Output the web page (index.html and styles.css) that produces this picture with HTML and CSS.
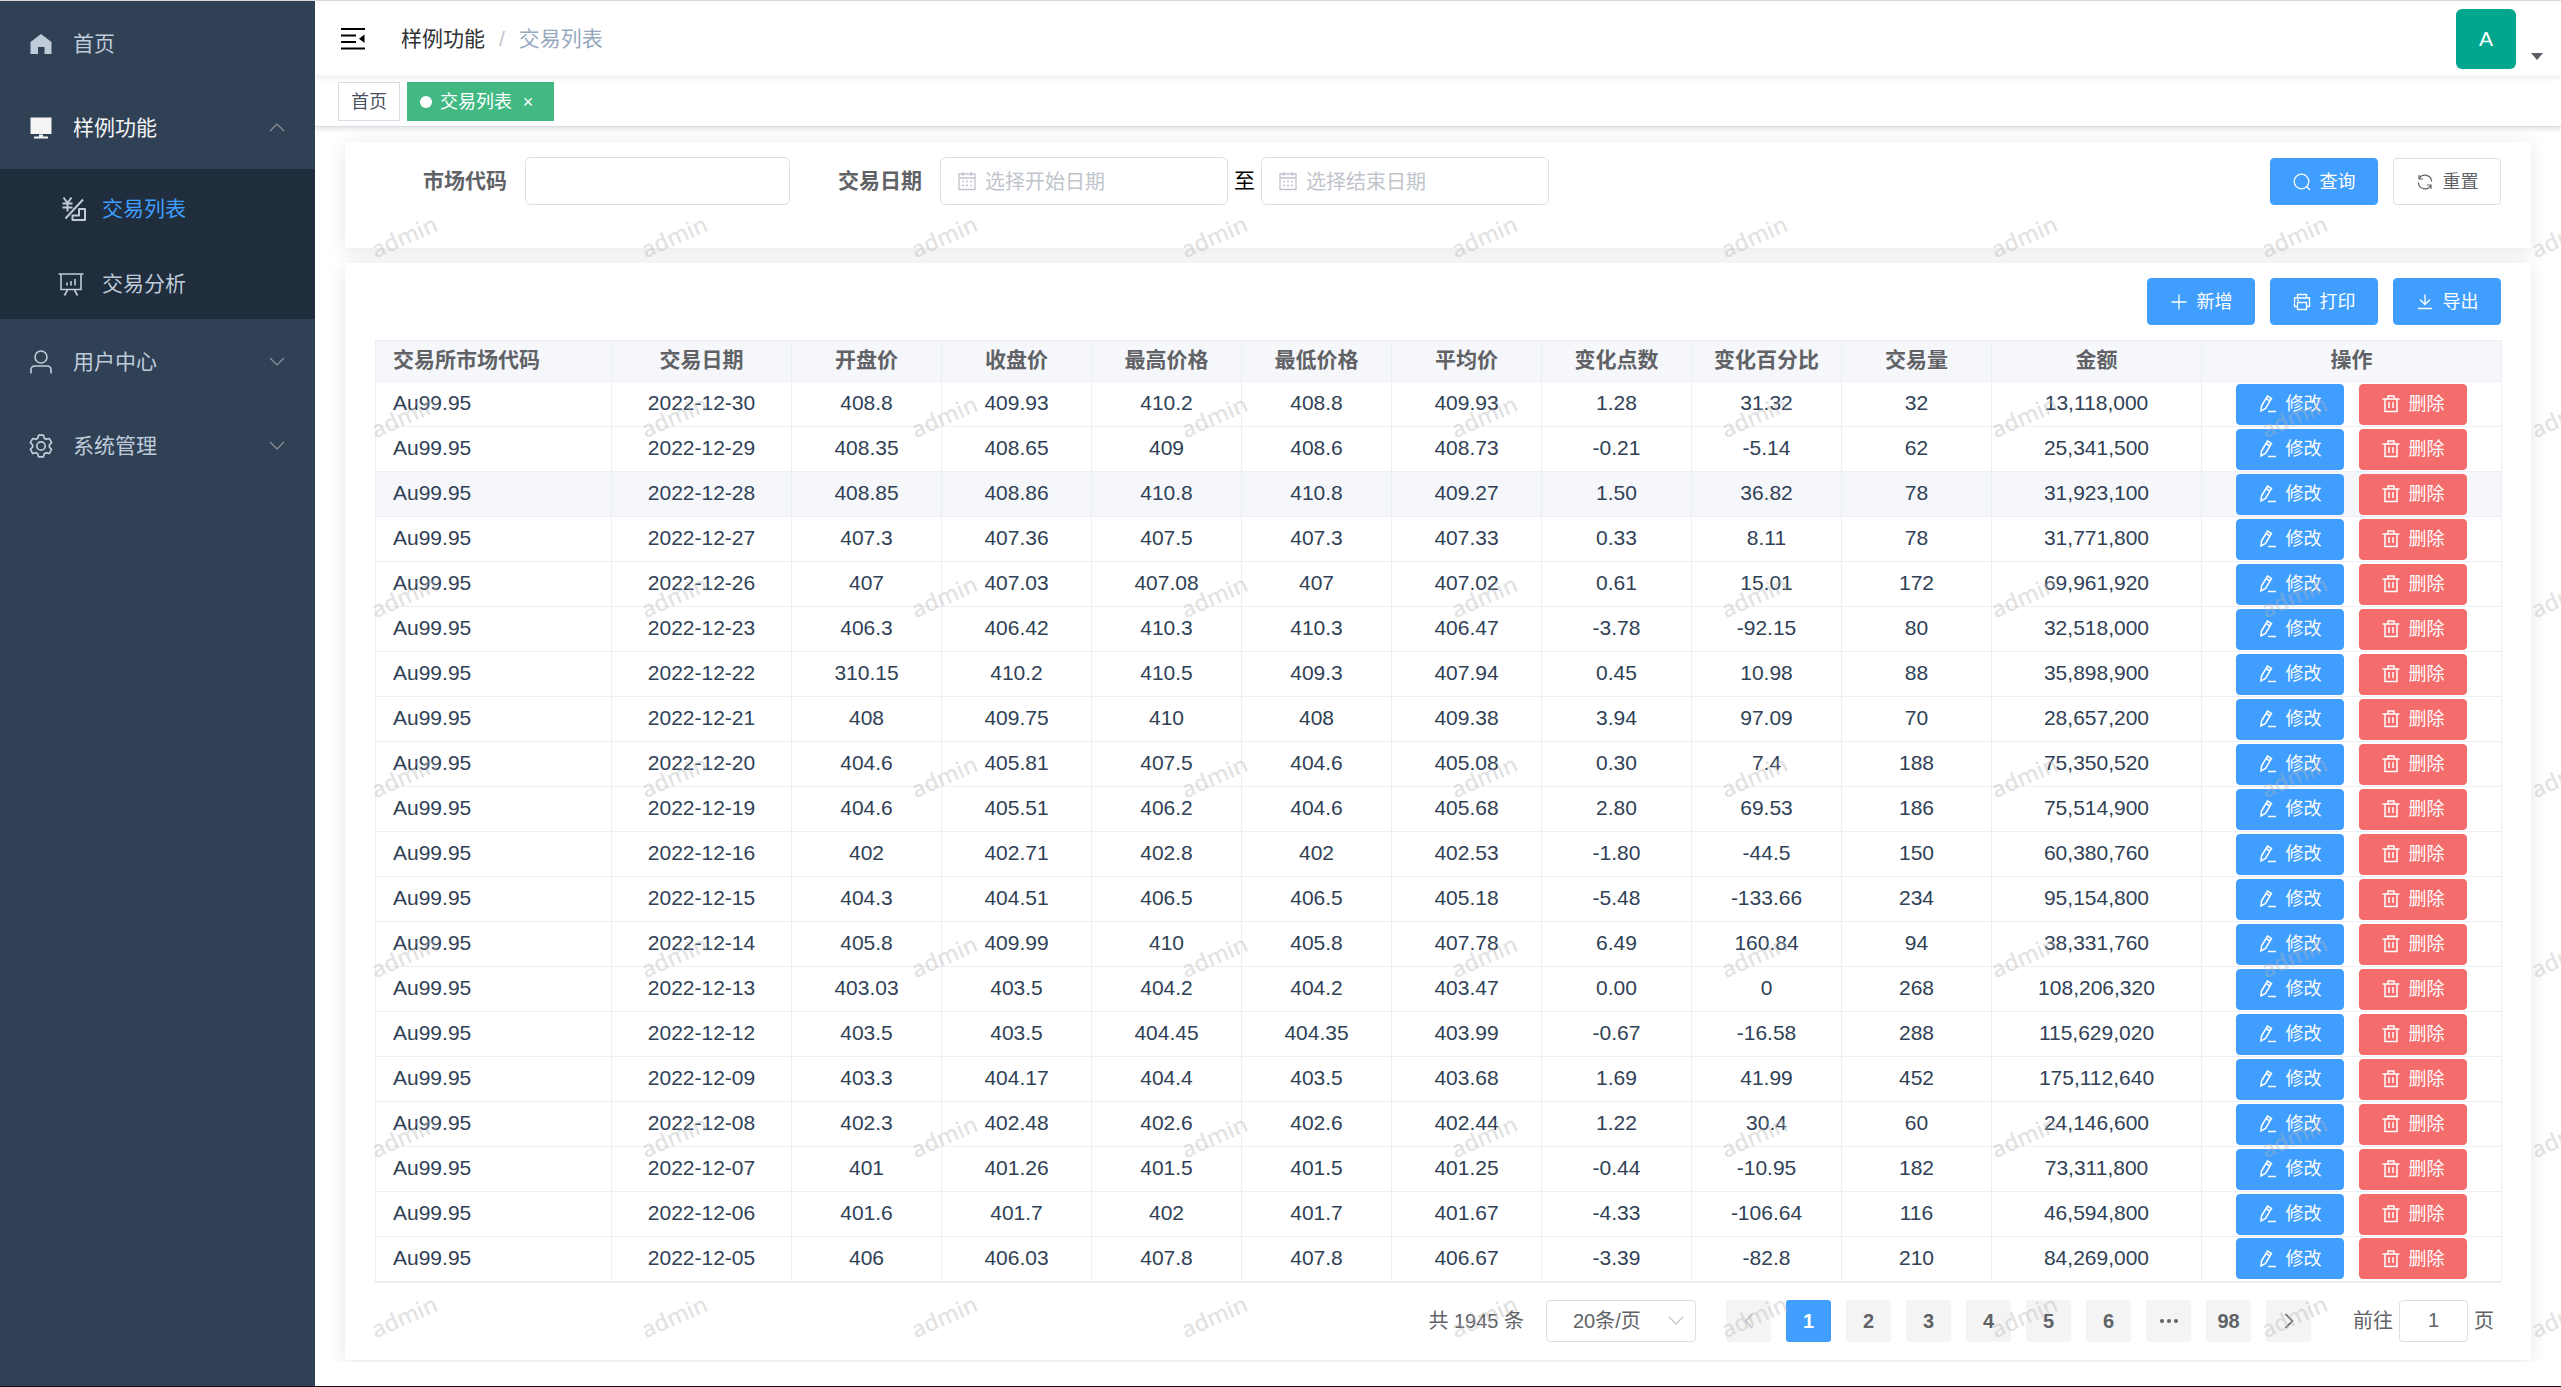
FILE: index.html
```html
<!DOCTYPE html>
<html lang="zh-CN">
<head>
<meta charset="utf-8">
<meta name="viewport" content="width=device-width, initial-scale=1">
<title>交易列表</title>
<link rel="stylesheet" href="styles.css">
</head>
<body>
<svg class="sprite" aria-hidden="true">
  <symbol id="i-home" viewBox="0 0 24 24"><path fill="currentColor" d="M12 2 22.500 10V22H15.500V15H9V22H1.500V10Z"/></symbol>
  <symbol id="i-monitor" viewBox="0 0 24 24"><path fill="currentColor" d="M1.500 1.500H22.500V18H1.500ZM10 18.500H14V20.500H19V22.500H5V20.500H10Z"/></symbol>
  <symbol id="i-list" viewBox="-2 0 24 24" overflow="visible"><g fill="none" stroke="currentColor" stroke-width="2"><path d="M1.500 0.500 5.500 6 9.500 0.500M0.500 6.500H10.500M0.500 10.500H10.500M5.500 6V14.500M21 2.500 3.500 21.500M17 12H23V23H10.500V18.500H17Z" stroke-linejoin="round"/></g></symbol>
  <symbol id="i-board" viewBox="1 0 24 24" overflow="visible"><g fill="none" stroke="currentColor" stroke-width="1.600"><path d="M-0.500 2H24.500M2 2V17.500H22V2M8.500 18 5.500 23.500M15.500 18 18.500 23.500M8 10.500V13.500M12 9V13.500M16 7V13.500"/></g></symbol>
  <symbol id="i-user" viewBox="0 0 24 24"><g fill="none" stroke="currentColor" stroke-width="1.600"><circle cx="12" cy="7" r="6"/><path d="M2 23.500V20Q2 16 6 16H18Q22 16 22 20V23.500"/></g></symbol>
  <symbol id="i-gear" viewBox="54 54 916 916"><path fill="currentColor" d="M600.704 64a32 32 0 0 1 30.464 22.208l35.200 109.376c14.784 7.232 28.928 15.360 42.432 24.512l112.384-24.192a32 32 0 0 1 34.432 15.360L944.320 364.800a32 32 0 0 1-4.032 37.504l-77.120 85.120a357.120 357.120 0 0 1 0 49.024l77.120 85.248a32 32 0 0 1 4.032 37.504l-88.704 153.600a32 32 0 0 1-34.432 15.296L708.800 803.904c-13.440 9.088-27.648 17.280-42.368 24.512l-35.264 109.376A32 32 0 0 1 600.704 960H423.296a32 32 0 0 1-30.464-22.208L357.696 828.480a351.616 351.616 0 0 1-42.560-24.640l-112.320 24.256a32 32 0 0 1-34.432-15.360L79.680 659.200a32 32 0 0 1 4.032-37.504l77.120-85.248a357.120 357.120 0 0 1 0-48.896l-77.120-85.248A32 32 0 0 1 79.680 364.800l88.704-153.600a32 32 0 0 1 34.432-15.296l112.320 24.256c13.568-9.152 27.776-17.408 42.560-24.640l35.200-109.312A32 32 0 0 1 423.232 64H600.640zm-23.424 64H446.720l-36.352 113.088-24.512 11.968a294.113 294.113 0 0 0-34.816 20.096l-22.656 15.360-116.224-25.088-65.280 113.152 79.680 88.192-1.920 27.136a293.120 293.120 0 0 0 0 40.192l1.920 27.136-79.808 88.192 65.344 113.152 116.224-25.024 22.656 15.296a294.113 294.113 0 0 0 34.816 20.096l24.512 11.968L446.720 896h130.688l36.480-113.152 24.448-11.904a288.282 288.282 0 0 0 34.752-20.096l22.592-15.296 116.288 25.024 65.280-113.152-79.744-88.192 1.920-27.136a293.120 293.120 0 0 0 0-40.256l-1.920-27.136 79.808-88.128-65.344-113.152-116.288 24.960-22.592-15.232a287.616 287.616 0 0 0-34.752-20.096l-24.448-11.904L577.344 128zM512 320a192 192 0 1 1 0 384 192 192 0 0 1 0-384m0 64a128 128 0 1 0 0 256 128 128 0 0 0 0-256"/></symbol>
  <symbol id="i-down" viewBox="0 0 18 18"><path fill="none" stroke="currentColor" stroke-width="1.200" d="M2 5 9 12 16 5"/></symbol>
  <symbol id="i-up" viewBox="0 0 18 18"><path fill="none" stroke="currentColor" stroke-width="1.200" d="M2 12 9 5 16 12"/></symbol>
  <symbol id="i-left" viewBox="0 0 18 18"><path fill="none" stroke="currentColor" stroke-width="1.600" d="M12.500 2 5.500 9 12.500 16"/></symbol>
  <symbol id="i-right" viewBox="0 0 18 18"><path fill="none" stroke="currentColor" stroke-width="1.600" d="M5.500 2 12.500 9 5.500 16"/></symbol>
  <symbol id="i-fold" viewBox="0 0 24 24"><path fill="currentColor" d="M0 1H24V3H0ZM0 7.500H15V9.500H0ZM0 14H15V16H0ZM0 20.500H24V22.500H0ZM23.500 7.500V16L18 11.800Z"/></symbol>
  <symbol id="i-calendar" viewBox="0 0 20 20"><path fill="none" stroke="currentColor" stroke-width="1.300" d="M2 3H18V18.500H2ZM2 7H18M6 1V5M14 1V5M5 10.500H7M9 10.500H11M13 10.500H15M5 14.500H7M9 14.500H11M13 14.500H15"/></symbol>
  <symbol id="i-search" viewBox="0 0 18 18"><g fill="none" stroke="currentColor" stroke-width="1.300"><circle cx="8.500" cy="8.500" r="7.300"/><path d="M13.500 13.500 17 17"/></g></symbol>
  <symbol id="i-refresh" viewBox="0 0 18 18"><path fill="none" stroke="currentColor" stroke-width="1.200" d="M3 2V6H7M3 6A6.700 6.700 0 0 1 15.700 8.500M15 16V12H11M15 12A6.700 6.700 0 0 1 2.300 9.500"/></symbol>
  <symbol id="i-plus" viewBox="0 0 18 18"><path fill="none" stroke="currentColor" stroke-width="1.300" d="M9 1.500V16.500M1.500 9H16.500"/></symbol>
  <symbol id="i-print" viewBox="0 0 18 18"><path fill="none" stroke="currentColor" stroke-width="1.300" d="M4.500 5V1.500H13.500V5M4.500 13.500H1.500V5H16.500V13.500H13.500M4.500 9.500H13.500V16.500H4.500ZM4 7.300H6"/></symbol>
  <symbol id="i-download" viewBox="0 0 18 18"><path fill="none" stroke="currentColor" stroke-width="1.300" d="M9 1.500V11.500M4 6.500 9 11.500 14 6.500M2 15.500H16"/></symbol>
  <symbol id="i-edit" viewBox="0 0 18 18"><path fill="none" stroke="currentColor" stroke-width="1.500" d="M2.500 11 8.500 1 12.500 3.500 6.500 13.500 2 16ZM7 3.500 11 6M9 16.500H17"/></symbol>
  <symbol id="i-trash" viewBox="0 0 18 18"><path fill="none" stroke="currentColor" stroke-width="1.500" d="M0.500 4H17.500M6 4V1H12V4M3 4V16.500H15V4M7 7V13M11 7V13"/></symbol>
</svg>

<div class="app">
  <nav class="sidebar">
    <a class="menu-item" href="#"><svg class="menu-icon"><use href="#i-home"/></svg><span>首页</span></a>
    <a class="menu-item menu-item-open" href="#"><svg class="menu-icon"><use href="#i-monitor"/></svg><span>样例功能</span><svg class="menu-arrow"><use href="#i-up"/></svg></a>
    <div class="submenu">
      <a class="submenu-item submenu-item-active" href="#"><svg class="menu-icon"><use href="#i-list"/></svg><span>交易列表</span></a>
      <a class="submenu-item" href="#"><svg class="menu-icon"><use href="#i-board"/></svg><span>交易分析</span></a>
    </div>
    <a class="menu-item" href="#"><svg class="menu-icon"><use href="#i-user"/></svg><span>用户中心</span><svg class="menu-arrow"><use href="#i-down"/></svg></a>
    <a class="menu-item" href="#"><svg class="menu-icon"><use href="#i-gear"/></svg><span>系统管理</span><svg class="menu-arrow"><use href="#i-down"/></svg></a>
  </nav>

  <div class="main">
    <header class="navbar">
      <button class="fold" type="button" aria-label="收起菜单"><svg class="fold-icon"><use href="#i-fold"/></svg></button>
      <nav class="breadcrumb"><a href="#">样例功能</a><span class="breadcrumb-sep">/</span><span class="breadcrumb-here">交易列表</span></nav>
      <button class="account" type="button"><span class="avatar">A</span><span class="caret"></span></button>
    </header>
    <div class="tags">
      <a class="tag" href="#">首页</a>
      <a class="tag tag-active" href="#"><span class="tag-dot"></span>交易列表<span class="tag-close">×</span></a>
    </div>

    <main class="content">
      <form class="card filter">
        <label class="field-label" for="market">市场代码</label>
        <input class="text-input market" id="market" type="text">
        <label class="field-label" for="start">交易日期</label>
        <div class="date-box"><svg class="date-icon"><use href="#i-calendar"/></svg><input class="date-input" id="start" type="text" placeholder="选择开始日期"></div>
        <label class="until" for="end">至</label>
        <div class="date-box"><svg class="date-icon"><use href="#i-calendar"/></svg><input class="date-input" id="end" type="text" placeholder="选择结束日期"></div>
        <div class="filter-actions">
          <button class="btn btn-primary" type="button"><svg class="btn-icon"><use href="#i-search"/></svg>查询</button>
          <button class="btn btn-plain" type="button"><svg class="btn-icon"><use href="#i-refresh"/></svg>重置</button>
        </div>
      </form>

      <section class="card listing">
        <div class="toolbar">
          <button class="btn btn-primary" type="button"><svg class="btn-icon"><use href="#i-plus"/></svg>新增</button>
          <button class="btn btn-primary" type="button"><svg class="btn-icon"><use href="#i-print"/></svg>打印</button>
          <button class="btn btn-primary" type="button"><svg class="btn-icon"><use href="#i-download"/></svg>导出</button>
        </div>
        <table class="trades">
          <colgroup>
            <col class="col-code"><col class="col-date">
            <col class="col-num"><col class="col-num"><col class="col-num"><col class="col-num">
            <col class="col-num"><col class="col-num"><col class="col-num"><col class="col-num">
            <col class="col-amount"><col class="col-actions">
          </colgroup>
          <thead>
            <tr><th>交易所市场代码</th><th>交易日期</th><th>开盘价</th><th>收盘价</th><th>最高价格</th><th>最低价格</th><th>平均价</th><th>变化点数</th><th>变化百分比</th><th>交易量</th><th>金额</th><th>操作</th></tr>
          </thead>
          <tbody id="rows"></tbody>
        </table>
        <div class="pagination">
          <span class="total">共 1945 条</span>
          <div class="size-box">
            <select class="size-select" aria-label="每页条数"><option>20条/页</option></select>
            <svg class="size-arrow"><use href="#i-down"/></svg>
          </div>
          <div class="pager">
            <button class="page" type="button" aria-label="上一页" disabled><svg class="page-icon"><use href="#i-left"/></svg></button>
            <button class="page page-active" type="button">1</button>
            <button class="page" type="button">2</button>
            <button class="page" type="button">3</button>
            <button class="page" type="button">4</button>
            <button class="page" type="button">5</button>
            <button class="page" type="button">6</button>
            <button class="page" type="button" aria-label="后五页"><svg class="dots" viewBox="0 0 18 4"><g fill="currentColor"><circle cx="2" cy="2" r="2"/><circle cx="9" cy="2" r="2"/><circle cx="16" cy="2" r="2"/></g></svg></button>
            <button class="page" type="button">98</button>
            <button class="page" type="button" aria-label="下一页"><svg class="page-icon"><use href="#i-right"/></svg></button>
          </div>
          <div class="jump"><label for="jump">前往</label><input class="jump-input" id="jump" type="text" value="1"><span>页</span></div>
        </div>
      </section>
    </main>
    <div class="watermark" id="watermark" aria-hidden="true"></div>
  </div>
</div>
<script src="app.js"></script>
</body>
</html>
```
FILE: styles.css
```css
* { box-sizing: border-box; }

body {
  margin: 0;
  background: #fff;
  color: #303133;
  font: 21px/28px "Liberation Sans", "Noto Sans CJK SC", sans-serif;
}

button, input, select { font: inherit; color: inherit; margin: 0; }
button { cursor: pointer; }
a { color: inherit; text-decoration: none; }
svg { flex: none; }
.sprite { position: absolute; width: 0; height: 0; }

.app {
  display: flex;
  min-height: 100vh;
  border-top: 1px solid #d8d8d8;
  border-bottom: 1px solid #111;
}

/* Sidebar */
.sidebar {
  flex: none;
  width: 315px;
  background: #304156;
  color: #bfcbd9;
}
.menu-item {
  display: flex;
  align-items: center;
  gap: 20px;
  height: 84px;
  padding: 2px 29px 0;
}
.menu-item-open { color: #f4f4f5; }
.menu-icon { width: 24px; height: 24px; overflow: visible; }
.menu-arrow { width: 18px; height: 18px; margin-left: auto; color: #909399; }
.submenu { background: #1f2d3d; }
.submenu-item {
  display: flex;
  align-items: center;
  gap: 18px;
  height: 75px;
  padding: 4px 30px 0 60px;
}
.submenu-item-active span { color: #409eff; }

/* Top bars */
.main {
  position: relative;
  flex: 1;
  min-width: 0;
  overflow: hidden;
}
.navbar {
  display: flex;
  align-items: center;
  height: 75px;
  padding: 0 18px 0 26px;
  box-shadow: 0 1px 6px rgba(0, 21, 41, .1);
}
.fold { display: flex; padding: 0; border: 0; background: none; color: #000; }
.fold-icon { width: 24px; height: 24px; }
.breadcrumb { display: flex; margin-left: 36px; }
.breadcrumb-sep { margin: 0 14px; color: #c0c4cc; }
.breadcrumb-here { color: #97a8be; }
.account {
  display: flex;
  align-items: flex-end;
  gap: 15px;
  margin-left: auto;
  padding: 0;
  border: 0;
  background: none;
}
.avatar {
  width: 60px;
  height: 60px;
  border-radius: 6px;
  background: #00a78e;
  color: #fff;
  line-height: 60px;
}
.caret {
  margin-bottom: 9px;
  border: 6px solid transparent;
  border-top: 7px solid #5a5e66;
  border-bottom: 0;
}
.tags {
  display: flex;
  gap: 7px;
  height: 51px;
  padding: 6px 23px;
  border-bottom: 1px solid #d8dce5;
  box-shadow: 0 2px 5px rgba(0, 0, 0, .12);
}
.tag {
  display: flex;
  align-items: center;
  height: 39px;
  padding: 0 12px;
  border: 1px solid #d8dce5;
  color: #495060;
  font-size: 18px;
}
.tag-active { border-color: #42b983; background: #42b983; color: #fff; }
.tag-dot { width: 12px; height: 12px; margin-right: 8px; border-radius: 50%; background: #fff; }
.tag-close { width: 12px; margin: 0 7px 0 10px; text-align: center; }

/* Cards */
.content {
  display: flex;
  flex-direction: column;
  gap: 15px;
  padding: 15px 30px 2px;
  overflow: hidden;
}
.card { background: #fff; box-shadow: 0 3px 18px rgba(0, 0, 0, .1); }

.filter {
  display: flex;
  align-items: flex-start;
  height: 106px;
  padding: 15px 30px;
}
.field-label {
  width: 150px;
  padding-right: 18px;
  color: #606266;
  font-weight: 700;
  line-height: 48px;
  text-align: right;
}
.text-input, .date-box {
  height: 48px;
  border: 1px solid #dcdfe6;
  border-radius: 6px;
  background: #fff;
}
.text-input { width: 265px; padding: 0 16px; }
.date-box {
  display: flex;
  align-items: center;
  gap: 8px;
  width: 288px;
  padding: 0 16px;
}
.date-icon { width: 20px; height: 20px; color: #c0c4cc; }
.date-input {
  flex: 1;
  min-width: 0;
  padding: 2px 0 0;
  border: 0;
  outline: 0;
  background: none;
  font-size: 20px;
}
.date-input::placeholder { color: #c0c4cc; }
.until { width: 33px; color: #000; line-height: 48px; text-align: center; }
.filter-actions, .toolbar { display: flex; justify-content: flex-end; gap: 15px; }
.filter-actions { margin-left: auto; }

.btn {
  display: flex;
  align-items: center;
  justify-content: center;
  gap: 9px;
  width: 108px;
  height: 47px;
  padding: 0;
  border: 1px solid #dcdfe6;
  border-radius: 4px;
  font-size: 18px;
}
.btn-icon { width: 18px; height: 18px; }
.btn-plain { background: #fff; color: #606266; }
.btn-primary { border-color: #409eff; background: #409eff; color: #fff; }
.btn-danger { border-color: #f56c6c; background: #f56c6c; color: #fff; }
.filter-actions .btn { margin-top: 1px; }

/* Table */
.listing { padding: 15px 30px 18px; }
.trades {
  width: 100%;
  margin-top: 15px;
  border-collapse: collapse;
  border-bottom: 2px solid #ebeef5;
  table-layout: fixed;
}
.col-code { width: 236px; }
.col-date { width: 180px; }
.col-num { width: 150px; }
.col-amount { width: 210px; }
.col-actions { width: 300px; }
.trades th, .trades td {
  padding: 0 0 2px;
  border: 1px solid #ebeef5;
  text-align: center;
}
.trades th { height: 41px; background: #f5f7fa; color: #606266; font-weight: 700; }
.trades td { height: 45px; color: #304156; }
.trades th:first-child, .trades td:first-child { padding-left: 17px; text-align: left; }
.trades td:last-child { padding: 0; }
.trades .row-hover td { background: #f5f7fa; }
.row-actions { display: flex; justify-content: center; gap: 15px; }
.row-actions .btn { height: 41px; }

/* Pagination */
.pagination {
  display: flex;
  align-items: center;
  justify-content: flex-end;
  height: 42px;
  margin-top: 17px;
  color: #606266;
  font-size: 20px;
}
.size-box {
  display: flex;
  align-items: center;
  width: 150px;
  height: 42px;
  margin: 0 30px 0 22px;
  padding: 0 10px 0 26px;
  border: 1px solid #dcdfe6;
  border-radius: 4px;
}
.size-select {
  flex: 1;
  min-width: 0;
  padding: 0;
  border: 0;
  background: none;
  appearance: none;
}
.size-arrow { width: 18px; height: 18px; color: #c0c4cc; }
.pager { display: flex; gap: 15px; }
.page {
  display: flex;
  align-items: center;
  justify-content: center;
  width: 45px;
  height: 42px;
  padding: 0;
  border: 0;
  border-radius: 3px;
  background: #f4f4f5;
  color: #606266;
  font-weight: 700;
}
.page:disabled { color: #c0c4cc; }
.page-active { background: #409eff; color: #fff; }
.page-icon { width: 18px; height: 18px; }
.dots { width: 18px; height: 4px; }
.jump { display: flex; align-items: center; gap: 6px; margin: 0 7px 0 42px; }
.jump-input {
  width: 69px;
  height: 42px;
  padding: 0;
  border: 1px solid #dcdfe6;
  border-radius: 4px;
  background: #fff;
  text-align: center;
}

/* Watermark laid over the whole content area */
.watermark {
  position: absolute;
  inset: 180px 0 0 0;
  display: grid;
  grid-template-columns: repeat(9, 270px);
  grid-auto-rows: 180px;
  overflow: hidden;
  color: rgba(180, 180, 180, .4);
  font: 500 23px/28px "Noto Sans", sans-serif;
  pointer-events: none;
}
.watermark span {
  justify-self: start;
  align-self: start;
  margin: 41px 0 0 54px;
  transform: rotate(-24deg);
}
```
FILE: app.js
```js
const trades = [
  "2022-12-30 408.8 409.93 410.2 408.8 409.93 1.28 31.32 32 13,118,000",
  "2022-12-29 408.35 408.65 409 408.6 408.73 -0.21 -5.14 62 25,341,500",
  "2022-12-28 408.85 408.86 410.8 410.8 409.27 1.50 36.82 78 31,923,100",
  "2022-12-27 407.3 407.36 407.5 407.3 407.33 0.33 8.11 78 31,771,800",
  "2022-12-26 407 407.03 407.08 407 407.02 0.61 15.01 172 69,961,920",
  "2022-12-23 406.3 406.42 410.3 410.3 406.47 -3.78 -92.15 80 32,518,000",
  "2022-12-22 310.15 410.2 410.5 409.3 407.94 0.45 10.98 88 35,898,900",
  "2022-12-21 408 409.75 410 408 409.38 3.94 97.09 70 28,657,200",
  "2022-12-20 404.6 405.81 407.5 404.6 405.08 0.30 7.4 188 75,350,520",
  "2022-12-19 404.6 405.51 406.2 404.6 405.68 2.80 69.53 186 75,514,900",
  "2022-12-16 402 402.71 402.8 402 402.53 -1.80 -44.5 150 60,380,760",
  "2022-12-15 404.3 404.51 406.5 406.5 405.18 -5.48 -133.66 234 95,154,800",
  "2022-12-14 405.8 409.99 410 405.8 407.78 6.49 160.84 94 38,331,760",
  "2022-12-13 403.03 403.5 404.2 404.2 403.47 0.00 0 268 108,206,320",
  "2022-12-12 403.5 403.5 404.45 404.35 403.99 -0.67 -16.58 288 115,629,020",
  "2022-12-09 403.3 404.17 404.4 403.5 403.68 1.69 41.99 452 175,112,640",
  "2022-12-08 402.3 402.48 402.6 402.6 402.44 1.22 30.4 60 24,146,600",
  "2022-12-07 401 401.26 401.5 401.5 401.25 -0.44 -10.95 182 73,311,800",
  "2022-12-06 401.6 401.7 402 401.7 401.67 -4.33 -106.64 116 46,594,800",
  "2022-12-05 406 406.03 407.8 407.8 406.67 -3.39 -82.8 210 84,269,000"
];

const actions = `<td><div class="row-actions">
  <button class="btn btn-primary" type="button"><svg class="btn-icon"><use href="#i-edit"/></svg>修改</button>
  <button class="btn btn-danger" type="button"><svg class="btn-icon"><use href="#i-trash"/></svg>删除</button>
</div></td>`;

document.getElementById("rows").innerHTML = trades.map((line, i) => {
  const cells = ["Au99.95", ...line.split(" ")].map(v => `<td>${v}</td>`).join("");
  return `<tr${i === 2 ? ' class="row-hover"' : ""}>${cells}${actions}</tr>`;
}).join("");

document.getElementById("watermark").innerHTML = "<span>admin</span>".repeat(63);
```
